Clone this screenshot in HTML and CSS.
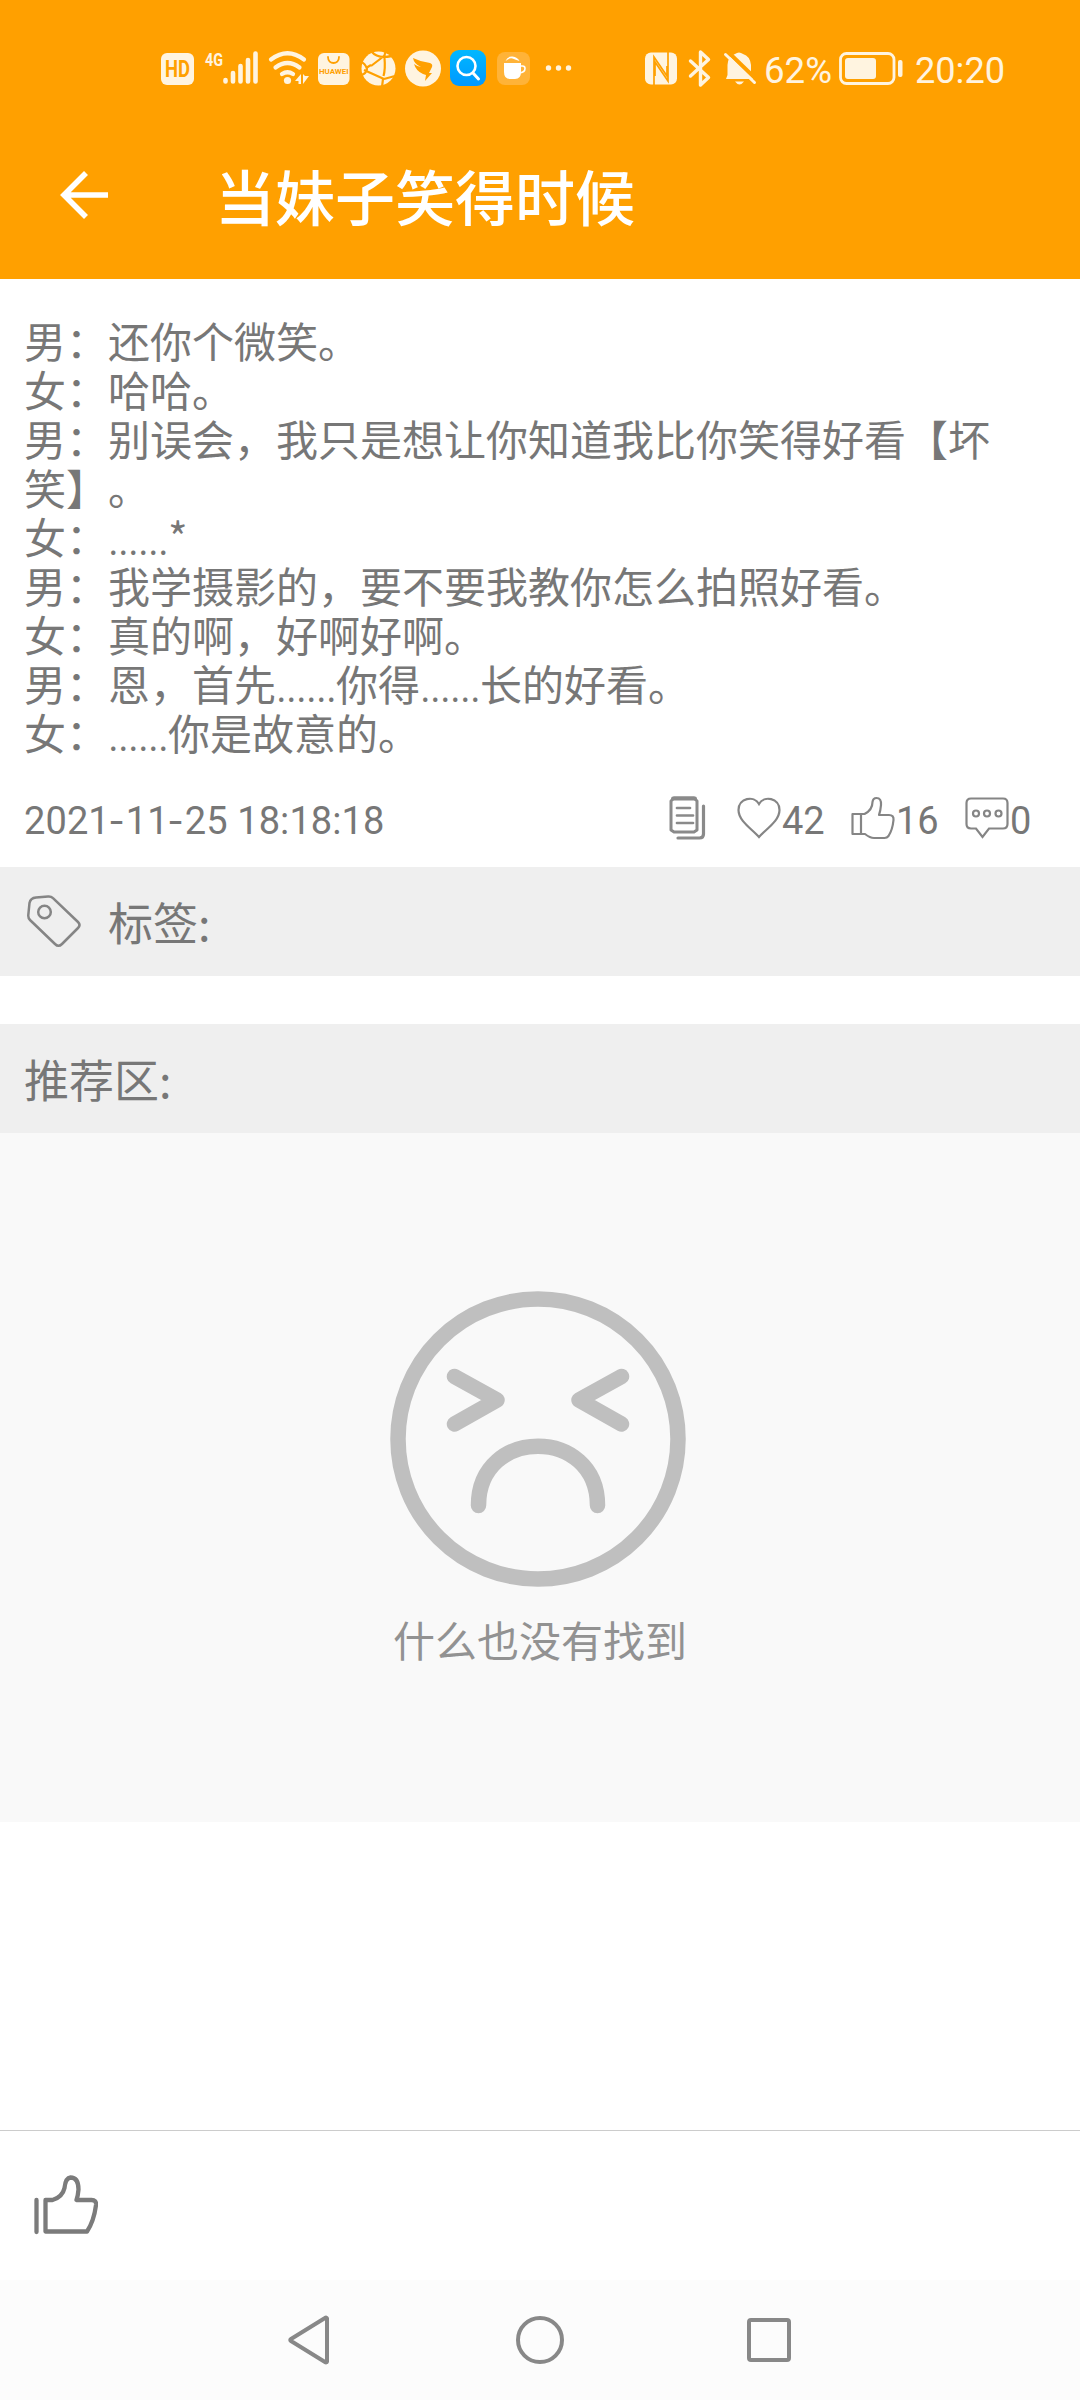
FILE: index.html
```html
<!DOCTYPE html>
<html lang="zh-CN">
<head>
<meta charset="utf-8">
<title>当妹子笑得时候</title>
<link rel="stylesheet" href="styles.css">
</head>
<body>
<header class="top">
  <div class="status">
    <svg class="status-left" viewBox="150 40 430 60" width="430" height="60" fill="#fff4e0">
      <rect x="161" y="53" width="33" height="32" rx="6"/>
      <text class="hd" x="165" y="76.500" textLength="25" lengthAdjust="spacingAndGlyphs">HD</text>
      <text class="net" x="205" y="66" textLength="18" lengthAdjust="spacingAndGlyphs">4G</text>
      <g stroke="#fff4e0" stroke-width="4.600" stroke-linecap="round" fill="none">
        <path d="M225.500 80v1.500M233 73v8.500M240.500 66v15.500M248 60v21.500M255.500 53.500v28"/>
        <path d="M271 59.500q16.500-12.500 33 0M275.500 67.500q12-9 24 0M282 74q5.500-3.500 11 0" stroke-width="4.200"/>
      </g>
      <circle cx="287.500" cy="80.500" r="3.600"/>
      <path d="M295 81l6-7v10h-2.500v-3zM303 74l2 2h4l-6 8z"/>
      <rect x="318" y="53" width="31.500" height="32" rx="6"/>
      <path d="M328 57c0 8 11 8 11 0" fill="none" stroke="#ffa000" stroke-width="1.800" stroke-linecap="round"/>
      <text class="brand" x="319" y="73.500" textLength="29.500" lengthAdjust="spacingAndGlyphs">HUAWEI</text>
      <circle cx="378.500" cy="68.500" r="17"/>
      <path d="M371 66l13-10M364 70l20 9M384.500 58q1 11-1 18M371 51q5 6 13 6 7 0 11-3M384 57l2-7M361 62q4 1 6 7-1 5-6 6M366 68l5-3M384 79l11-3M383 79l-1 8" fill="none" stroke="#ffa000" stroke-width="2.200"/>
      <circle cx="423" cy="68.500" r="18"/>
      <path d="M413 58q8 4 17 5 3 1 2 4l-3 6h3l-7 8 1-6-3-1q-7-3-9-10 4 3 7 3-7-3-8-9z" fill="#ffa000"/>
      <rect x="450" y="50" width="36" height="36" rx="9" fill="url(#blue)"/>
      <circle cx="466.500" cy="66" r="9" fill="none" stroke="#fff" stroke-width="2.600"/>
      <path d="M473 73l5.500 6" stroke="#fff" stroke-width="3" stroke-linecap="round"/>
      <rect x="497" y="52" width="33" height="33" rx="8" fill="#ffb338"/>
      <path d="M504 63h17v9q0 7-6 7h-5q-6 0-6-7zM505.500 61q4-3.500 7-2.500t7 2.500q-2-4-7-4.500t-7 4.500z" fill="#fff"/>
      <path d="M520 66h2.500q2.500 0 2.500 2.500 0 4-6 4.500" fill="none" stroke="#fff" stroke-width="1.600"/>
      <circle cx="548.500" cy="68" r="2.700"/><circle cx="558.500" cy="68" r="2.700"/><circle cx="568.500" cy="68" r="2.700"/>
      <defs><linearGradient id="blue" x1="0" y1="0" x2="0" y2="1"><stop stop-color="#00b8ff"/><stop offset="1" stop-color="#0098ff"/></linearGradient></defs>
    </svg>
    <svg class="status-right" viewBox="640 40 380 60" width="380" height="60" fill="#fff4e0">
      <rect x="645" y="52.500" width="32" height="32" rx="6"/>
      <path d="M654 85V57l13 19V66M668 52v29l-13-19v14" fill="none" stroke="#ffa000" stroke-width="1.700"/>
      <path d="M690.500 61l18 16.500-8 7.500V52l8 7.500-18 16.500" fill="none" stroke="#fff4e0" stroke-width="3.400" stroke-linejoin="round" stroke-linecap="round"/>
      <path d="M726 79h28l-3-4v-10q-1-9-8-11-4-3-8 0-7 2-7.500 11v10zM735 81.500h9q-4.500 6-9 0z"/>
      <path d="M727 51l29 28" stroke="#ffa000" stroke-width="4"/>
      <path d="M725.500 54.500l29 28" stroke="#fff4e0" stroke-width="3" stroke-linecap="round"/>
      <text class="clock" x="764" y="83" textLength="68" lengthAdjust="spacingAndGlyphs">62%</text>
      <rect x="840.500" y="53.500" width="53.500" height="30" rx="6" fill="none" stroke="#fff4e0" stroke-width="2.800"/>
      <rect x="845" y="58" width="31" height="21" rx="3"/>
      <rect x="898" y="60" width="4.500" height="17" rx="2"/>
      <text class="clock" x="915" y="83" textLength="90" lengthAdjust="spacingAndGlyphs">20:20</text>
    </svg>
  </div>
  <div class="bar">
    <svg class="back" viewBox="0 0 48 48" width="48" height="48" fill="none" stroke="#fff" stroke-width="5.600"><path d="M48 24H5M26 2L4 24l22 22"/></svg>
    <h1 class="title">当妹子笑得时候</h1>
  </div>
</header>
<main class="content">
  <p class="joke">男：还你个微笑。<br>女：哈哈。<br>男：别误会，我只是想让你知道我比你笑得好看【坏<br>笑】。<br>女：<span class="dots">......</span>*<br>男：我学摄影的，要不要我教你怎么拍照好看。<br>女：真的啊，好啊好啊。<br>男：恩，首先<span class="dots">......</span>你得<span class="dots">......</span>长的好看。<br>女：<span class="dots">......</span>你是故意的。</p>
  <div class="meta">
    <time class="date">2021<i>-</i>11<i>-</i>25 18:18:18</time>
    <svg class="copy" viewBox="0 0 38 46" width="38" height="46" fill="none" stroke="#8a8a8a" stroke-linecap="round">
      <path d="M6 3h20l3 3v29l-3 2H6l-3-2V6z" stroke-width="3" stroke-linejoin="round"/><path d="M5 3.500h22" stroke-width="3.800"/>
      <path d="M9 13h13M9 20.500h16M9 28h16" stroke-width="2.700"/><path d="M35.500 11v28q0 4-4 4H10" stroke-width="3.200"/>
    </svg>
    <span class="stat heart"><svg viewBox="0 0 44 42" width="44" height="42" fill="none" stroke="#858585" stroke-width="2.200"><path d="M22 40C15 32 1.500 24 1.500 13 1.500 1 17-2 22 7 27-2 42.500 1 42.500 13 42.500 24 29 32 22 40z"/></svg><span class="num">42</span></span>
    <span class="stat like"><svg viewBox="0 0 44 44" width="44" height="44" fill="none" stroke="#858585" stroke-width="2.200" stroke-linejoin="round"><path d="M1.500 18h12q8-4 8-12Q22 2 25.500 2q5 0 4.500 7-.5 6-2 10h10q5 0 4.500 5-1 10-5 16-1.500 2-4 2H23q-4 0-9-4H1.500zM10 18v20"/></svg><span class="num">16</span></span>
    <span class="stat comment"><svg viewBox="0 0 44 42" width="44" height="42" fill="none" stroke="#858585" stroke-width="2.200"><path d="M6 1.500h32q4.500 0 4.500 4.500v21q0 4.500-4.500 4.500H24L17.500 40 11 31.500H6q-4.500 0-4.500-4.500V6Q1.500 1.500 6 1.500z"/><circle cx="11" cy="16.500" r="3"/><circle cx="22" cy="16.500" r="3"/><circle cx="33.500" cy="16.500" r="3"/></svg><span class="num">0</span></span>
  </div>
  <div class="section tags">
    <svg viewBox="0 0 54 54" width="54" height="54" fill="none" stroke="#858585" stroke-width="2.500"><path d="M9 2.500L21 1.500q3-.3 5 1.700L51 27q3 3 0 6L35 49q-3.500 3.500-7 0L3 25q-2-2-1.700-5L2.500 8Q3.500 3 9 2.500z"/><circle cx="17.500" cy="17" r="6.300"/></svg>
    <span>标签:</span>
  </div>
  <div class="section recommend"><span>推荐区:</span></div>
  <div class="empty">
    <svg viewBox="0 0 296 296" width="296" height="296" fill="none" stroke="#bfbfbf" stroke-width="15.500" stroke-linecap="round" stroke-linejoin="round"><circle cx="148" cy="148" r="140"/><path d="M64.500 85.500L107 109l-42.500 24M231.500 85.500L189 109l42.500 24M88.500 214.500c0-79 119-79 119 0"/></svg>
    <p>什么也没有找到</p>
  </div>
</main>
<footer class="actions">
  <svg viewBox="0 0 64 60" width="64" height="60" fill="none" stroke="#7b7b7b" stroke-width="4.300" stroke-linejoin="round" stroke-linecap="round"><path d="M2.500 25v32"/><path d="M11.500 25h7q10-3 12-12 1-10 6-10.500 8 0 8 12-.5 6-2 10.500h15q5 0 4.500 5-2 16-9 26.500H11.500z"/></svg>
</footer>
<nav class="nav">
  <svg viewBox="0 0 42 50" width="42" height="50" fill="none" stroke="#888" stroke-width="4" stroke-linejoin="round"><path d="M39 3.500v43Q38.500 48 37 47L3 26q-1.500-1 0-2L37 3q1.500-1 2 .5z"/></svg>
  <svg viewBox="0 0 48 48" width="48" height="48" fill="none" stroke="#888" stroke-width="4"><circle cx="24" cy="24" r="22"/></svg>
  <svg viewBox="0 0 44 44" width="44" height="44" fill="none" stroke="#888" stroke-width="4"><rect x="2" y="2" width="40" height="40" rx="2"/></svg>
</nav>
</body>
</html>
```
FILE: styles.css
```css
* { box-sizing: border-box; }
body {
  margin: 0;
  width: 1080px;
  height: 2400px;
  display: flex;
  flex-direction: column;
  background: #fff;
  color: #777;
  font-family: "Noto Sans CJK SC", sans-serif;
  text-spacing-trim: space-all;
  overflow: hidden;
}
p, h1 { margin: 0; }
svg { display: block; flex: none; }
.top { height: 279px; background: #ffa000; color: #fff; }
.status { height: 100px; padding: 40px 60px 0 150px; display: flex; justify-content: space-between; }
.hd { font: 700 23px Roboto, sans-serif; fill: #ffa000; }
.net { font: 700 19px Roboto, sans-serif; }
.brand { font: 700 8px Roboto, sans-serif; fill: #ffa000; }
.clock { font: 400 37px Roboto, sans-serif; }
.bar { height: 179px; display: flex; align-items: flex-start; padding: 0 0 0 60px; }
.back { margin-top: 71px; }
.title { margin: 55px 0 0 107px; font-size: 60px; line-height: 80px; font-weight: 500; }
.content { flex: 1; }
.joke { padding: 36px 0 0 24px; font-size: 42px; line-height: 49px; white-space: nowrap; }
.dots { letter-spacing: -.5px; font-weight: 300; }
.meta { height: 111px; padding-left: 24px; display: flex; font-family: Roboto, sans-serif; font-size: 38px; line-height: 50px; }
.date { margin-top: 40px; width: 644px; letter-spacing: .1px; white-space: nowrap; }
.date i { display: inline-block; width: 16px; font-style: normal; transform: scaleX(1.25); transform-origin: left; }
.copy { margin-top: 39px; }
.stat { display: flex; }
.heart { margin-left: 31px; width: 114px; }
.heart svg { margin-top: 41px; }
.like { width: 114px; }
.like svg { margin-top: 40px; }
.comment svg { margin-top: 41px; }
.num { margin: 40px 0 0 1px; }
.section { height: 109px; background: #efefef; padding: 0 24px; display: flex; align-items: center; font-size: 45px; line-height: 60px; }
.tags { gap: 27px; padding-left: 27px; }
.recommend { margin-top: 48px; }
.empty { height: 689px; background: #f9f9f9; color: #929292; display: flex; flex-direction: column; align-items: center; padding: 158px 4px 0 0; }
.empty p { margin: 22px 0 0 4px; font-size: 42px; line-height: 60px; }
.actions { height: 150px; border-top: 1px solid #ccc; padding: 44px 34px; }
.nav { height: 120px; background: #fcfcfc; display: flex; align-items: center; justify-content: space-between; padding: 0 289px 0 288px; }
.nav svg:nth-child(2) { margin-left: 2px; }
```
